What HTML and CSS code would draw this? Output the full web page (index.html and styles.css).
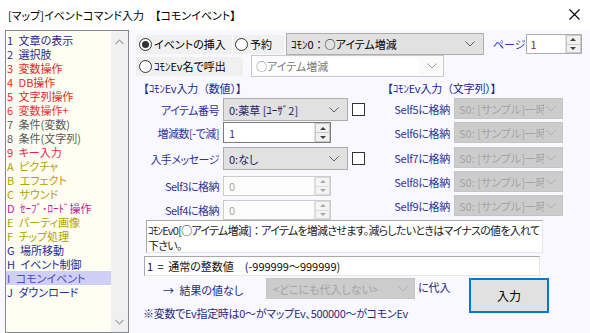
FILE: index.html
```html
<!DOCTYPE html>
<html lang="ja">
<head>
<meta charset="utf-8">
<title>[マップ]イベントコマンド入力</title>
<link rel="stylesheet" href="styles.css">
</head>
<body>
<div class="window">
  <div class="titlebar">
    <span class="title">[マップ]イベントコマンド入力　【コモンイベント】</span>
    <svg class="close" width="11" height="11" viewBox="0 0 11 11"><path d="M0.5 0.5L10.5 10.5M10.5 0.5L0.5 10.5" stroke="#000" stroke-width="1.1" fill="none"/></svg>
  </div>
  <div class="main">
    <div class="list">
      <ul class="items">
        <li class="c-navy">1 文章の表示</li>
        <li class="c-navy">2 選択肢</li>
        <li class="c-red">3 変数操作</li>
        <li class="c-red">4 DB操作</li>
        <li class="c-red">5 文字列操作</li>
        <li class="c-red2">6 変数操作+</li>
        <li class="c-gray">7 条件(変数)</li>
        <li class="c-gray">8 条件(文字列)</li>
        <li class="c-pink">9 キー入力</li>
        <li class="c-olive">A ピクチャ</li>
        <li class="c-olive">B エフェクト</li>
        <li class="c-olive">C サウンド</li>
        <li class="c-magenta">D ｾｰﾌﾞ･ﾛｰﾄﾞ操作</li>
        <li class="c-olive">E パーティ画像</li>
        <li class="c-olive">F チップ処理</li>
        <li class="c-blue">G 場所移動</li>
        <li class="c-blue">H イベント制御</li>
        <li class="c-sel">I コモンイベント</li>
        <li class="c-blue">J ダウンロード</li>
      </ul>
      <div class="scrollbar">
        <svg class="sb-arrow" width="9" height="6" viewBox="0 0 9 6"><path d="M0.5 5L4.5 1L8.5 5" stroke="#a6a6a6" stroke-width="1.2" fill="none"/></svg>
        <svg class="sb-arrow" width="9" height="6" viewBox="0 0 9 6"><path d="M0.5 1L4.5 5L8.5 1" stroke="#a6a6a6" stroke-width="1.2" fill="none"/></svg>
      </div>
    </div>

    <div class="panel">
      <div class="row-top">
        <label class="radio r-insert"><span class="circle on"></span>イベントの挿入</label>
        <label class="radio r-reserve"><span class="circle"></span>予約</label>
        <div class="combo combo-main"><span class="combo-text">ｺﾓﾝ0<span class="fw">：</span>○アイテム増減</span><svg class="chev" width="10" height="6" viewBox="0 0 10 6"><path d="M0.5 0.5L5 5L9.5 0.5" stroke="#606060" fill="none"/></svg></div>
        <span class="page-label">ページ</span>
        <div class="spin spin-page"><span class="spin-val">1</span><div class="spin-btns"><span class="sb up"></span><span class="sb down"></span></div></div>
      </div>
      <div class="row-second">
        <label class="radio r-name"><span class="circle"></span>ｺﾓﾝEv名で呼出</label>
        <div class="combo combo-name"><span class="combo-field">○アイテム増減</span><svg class="chev" width="10" height="6" viewBox="0 0 10 6"><path d="M0.5 0.5L5 5L9.5 0.5" stroke="#a0a0a0" fill="none"/></svg></div>
      </div>

      <div class="cols">
        <div class="col-left">
          <div class="sec-title">【ｺﾓﾝEv入力（数値）】</div>
          <div class="frow r1">
            <span class="lbl">アイテム番号</span>
            <div class="combo combo-form"><span class="combo-text">0:薬草 [ﾕｰｻﾞ2]</span><svg class="chev" width="10" height="6" viewBox="0 0 10 6"><path d="M0.5 0.5L5 5L9.5 0.5" stroke="#606060" fill="none"/></svg></div>
            <span class="check"></span>
          </div>
          <div class="frow r2">
            <span class="lbl">増減数[-で減]</span>
            <div class="spin spin-form"><span class="spin-val">1</span><div class="spin-btns"><span class="sb up"></span><span class="sb down"></span></div></div>
          </div>
          <div class="frow r3">
            <span class="lbl">入手メッセージ</span>
            <div class="combo combo-form"><span class="combo-text">0:なし</span><svg class="chev" width="10" height="6" viewBox="0 0 10 6"><path d="M0.5 0.5L5 5L9.5 0.5" stroke="#606060" fill="none"/></svg></div>
            <span class="check"></span>
          </div>
          <div class="frow r4">
            <span class="lbl">Self3に格納</span>
            <div class="spin spin-form disabled"><span class="spin-val">0</span><div class="spin-btns"><span class="sb up"></span><span class="sb down"></span></div></div>
          </div>
          <div class="frow r5">
            <span class="lbl">Self4に格納</span>
            <div class="spin spin-form disabled"><span class="spin-val">0</span><div class="spin-btns"><span class="sb up"></span><span class="sb down"></span></div></div>
          </div>
        </div>

        <div class="col-right">
          <div class="sec-title">【ｺﾓﾝEv入力（文字列）】</div>
          <div class="srow s1"><span class="lbl2">Self5に格納</span><div class="combo combo-dis"><span class="combo-text">S0: [サンプル]一時</span><svg class="chev" width="10" height="6" viewBox="0 0 10 6"><path d="M0.5 0.5L5 5L9.5 0.5" stroke="#b0b0b0" fill="none"/></svg></div></div>
          <div class="srow s2"><span class="lbl2">Self6に格納</span><div class="combo combo-dis"><span class="combo-text">S0: [サンプル]一時</span><svg class="chev" width="10" height="6" viewBox="0 0 10 6"><path d="M0.5 0.5L5 5L9.5 0.5" stroke="#b0b0b0" fill="none"/></svg></div></div>
          <div class="srow s3"><span class="lbl2">Self7に格納</span><div class="combo combo-dis"><span class="combo-text">S0: [サンプル]一時</span><svg class="chev" width="10" height="6" viewBox="0 0 10 6"><path d="M0.5 0.5L5 5L9.5 0.5" stroke="#b0b0b0" fill="none"/></svg></div></div>
          <div class="srow s4"><span class="lbl2">Self8に格納</span><div class="combo combo-dis"><span class="combo-text">S0: [サンプル]一時</span><svg class="chev" width="10" height="6" viewBox="0 0 10 6"><path d="M0.5 0.5L5 5L9.5 0.5" stroke="#b0b0b0" fill="none"/></svg></div></div>
          <div class="srow s5"><span class="lbl2">Self9に格納</span><div class="combo combo-dis"><span class="combo-text">S0: [サンプル]一時</span><svg class="chev" width="10" height="6" viewBox="0 0 10 6"><path d="M0.5 0.5L5 5L9.5 0.5" stroke="#b0b0b0" fill="none"/></svg></div></div>
        </div>
      </div>

      <div class="desc">ｺﾓﾝEv0[○アイテム増減]<span class="fw">：</span>アイテムを増減させます。減らしたいときはマイナスの値を入れて<br>下さい。</div>
      <div class="valbox">1 = 通常の整数値　(-999999～999999)</div>

      <div class="bottom">
        <div class="bottom-left">
          <div class="result-row">
            <span class="result-lbl">→ 結果の値なし</span>
            <div class="combo combo-result"><span class="combo-text">&lt;どこにも代入しない&gt;</span><svg class="chev" width="10" height="6" viewBox="0 0 10 6"><path d="M0.5 0.5L5 5L9.5 0.5" stroke="#b0b0b0" fill="none"/></svg></div>
            <span class="assign">に代入</span>
          </div>
          <div class="note">※変数でEv指定時は0～がマップEv、500000～がコモンEv</div>
        </div>
        <button class="ok">入力</button>
      </div>
    </div>
  </div>
</div>
</body>
</html>
```

FILE: styles.css
```css
* { box-sizing: border-box; margin: 0; padding: 0; }
body {
  margin: 0;
  width: 590px;
  height: 333px;
  overflow: hidden;
  font-family: "Noto Sans CJK JP", "Noto Sans", sans-serif;
  font-size: 11px;
  font-feature-settings: "palt" 1;
  background: #f8f8fe;
  color: #000;
}
.window { width: 590px; height: 333px; display: flex; flex-direction: column; }
.fw { font-feature-settings: normal; }

.titlebar {
  height: 30px;
  background: #fff;
  display: flex;
  align-items: center;
  justify-content: space-between;
  padding: 0 10px 0 8px;
  font-size: 11px;
}
.title { white-space: nowrap; }
.close { margin-top: -2px; }

.main { display: flex; height: 303px; }

/* list */
.list {
  margin-left: 5px;
  width: 124px;
  height: 303px;
  border: 1px solid #828790;
  background: #fdfdf2;
  display: flex;
}
.items { flex: 1; list-style: none; padding-top: 2px; overflow: hidden; }
.items li {
  height: 14px;
  line-height: 14px;
  padding-left: 1px;
  white-space: nowrap;
  font-size: 11px;
  word-spacing: 3px;
}
.c-navy { color: #2c2a8c; }
.c-red { color: #e42a2a; }
.c-red2 { color: #f2303e; }
.c-gray { color: #5a5a5a; }
.c-pink { color: #ea1e52; }
.c-olive { color: #b3a200; }
.c-magenta { color: #c81898; }
.c-blue { color: #1f2c98; }
.c-sel { color: #4a4ac4; background: #cfcff6; }

.scrollbar {
  width: 17px;
  background: #f0f0f0;
  display: flex;
  flex-direction: column;
  align-items: center;
  justify-content: space-between;
  padding: 8px 0 7px;
}

/* panel */
.panel { margin-left: 7px; width: 445px; display: flex; flex-direction: column; }

.row-top { margin-top: 3px; height: 22px; display: flex; align-items: center; }
.row-second { margin-top: 0; height: 22px; display: flex; align-items: center; }

.radio {
  height: 19px;
  background: #f0f0f0;
  display: flex;
  align-items: center;
  gap: 2px;
  white-space: nowrap;
  flex: none;
}
.r-insert { width: 96px; padding-left: 3px; }
.r-reserve { width: 51px; margin-left: 1px; padding-left: 2px; }
.r-name { width: 107px; padding-left: 3px; }
.circle {
  width: 13px; height: 13px;
  border: 1px solid #333;
  border-radius: 50%;
  background: #fff;
  display: flex; align-items: center; justify-content: center;
  flex: none;
}
.circle.on::after {
  content: "";
  width: 7px; height: 7px;
  border-radius: 50%;
  background: #333;
}

.combo {
  display: flex;
  align-items: center;
  justify-content: space-between;
  border: 1px solid #adadad;
  background: #e1e1e1;
  padding: 0 8px 0 4px;
  white-space: nowrap;
  overflow: hidden;
  flex: none;
}
.combo-text { overflow: hidden; white-space: nowrap; flex: 1; }
.chev { flex: none; margin-left: 2px; }
.combo-main { margin-left: 2px; width: 198px; height: 22px; }
.page-label { margin-left: 9px; color: #3434c0; white-space: nowrap; flex: none; }

.spin {
  display: flex;
  align-items: stretch;
  border: 1px solid #adadad;
  background: #fff;
  flex: none;
}
.spin-val { flex: 1; padding-left: 4px; display: flex; align-items: center; }
.spin-btns { width: 16px; display: flex; flex-direction: column; border-left: 1px solid #e0e0e0; }
.sb {
  flex: 1;
  background: #f0f0f0;
  border: 1px solid #c8c8c8;
  display: flex; align-items: center; justify-content: center;
}
.sb.up { border-bottom: none; }
.sb.up::after {
  content: "";
  border-left: 3px solid transparent;
  border-right: 3px solid transparent;
  border-bottom: 3px solid #404040;
}
.sb.down::after {
  content: "";
  border-left: 3px solid transparent;
  border-right: 3px solid transparent;
  border-top: 3px solid #404040;
}
.spin-page { margin-left: auto; width: 56px; height: 20px; }
.spin-page .spin-val { color: #8a2a2a; }

.r-name + .combo-name { margin-left: 8px; }
.combo-name {
  width: 193px; height: 22px;
  background: #fafafa;
  border-color: #cacaca;
  padding: 2px 6px 2px 2px;
}
.combo-field {
  flex: 1;
  height: 16px;
  background: #fff;
  color: #7a7a7a;
  padding-left: 2px;
  line-height: 16px;
  margin-right: 6px;
}

/* columns */
.cols { display: flex; margin-top: 3px; }
.col-left { width: 244px; display: flex; flex-direction: column; }
.col-right { display: flex; flex-direction: column; }
.sec-title {
  height: 15px; line-height: 15px; margin-top: 1px; padding-left: 2px;
  color: #25258f; white-space: nowrap;
  font-feature-settings: normal;
  letter-spacing: -0.2px;
}

.frow { display: flex; align-items: center; }
.lbl {
  width: 83px;
  text-align: right;
  color: #33339a;
  white-space: nowrap;
  letter-spacing: -0.5px;
  margin-right: 4px;
  flex: none;
}
.r1 { margin-top: 2px; height: 23px; }
.r2 { margin-top: 1px; height: 21px; }
.r3 { margin-top: 4px; height: 23px; }
.r4 { margin-top: 6px; height: 20px; }
.r5 { margin-top: 4px; height: 20px; }
.combo-form { width: 125px; height: 23px; color: #202060; padding-left: 5px; }
.check { width: 13px; height: 13px; border: 1px solid #333; background: #fff; margin-left: 4px; flex: none; }
.spin-form { width: 108px; height: 21px; border-color: #7a7a7a; }
.spin-form .spin-val { color: #4a2a8a; padding-left: 5px; }
.spin-form.disabled { height: 20px; border-color: #cccccc; background: #fcfcfc; }
.spin-form.disabled .spin-val { color: #a8a8a8; }
.disabled .sb { border-color: #dadada; background: #f4f4f4; }
.disabled .sb.up::after { border-bottom-color: #a8a8a8; }
.disabled .sb.down::after { border-top-color: #a8a8a8; }

.srow { display: flex; align-items: center; height: 21px; }
.s1 { margin-top: 2px; }
.s2 { margin-top: 3px; }
.s3 { margin-top: 4px; }
.s4 { margin-top: 3px; }
.s5 { margin-top: 3px; }
.lbl2 { width: 70px; text-align: right; color: #33339a; margin-right: 4px; white-space: nowrap; letter-spacing: -0.3px; flex: none; }
.combo-dis {
  width: 109px; height: 21px;
  background: #cccccc;
  border-color: #c4c4c4;
  color: #a4a4a4;
  padding: 0 6px 0 4px;
}

/* description */
.desc {
  margin-left: 10px;
  width: 397px;
  height: 33px;
  background: #fff;
  border: 1px solid #a8a8a8;
  border-right-color: #e6e6e6;
  border-bottom-color: #e6e6e6;
  padding: 2px 1px 0 1px;
  line-height: 15px;
  white-space: nowrap;
  overflow: hidden;
  color: #222;
  letter-spacing: -0.75px;
}
.valbox {
  margin-left: 8px;
  margin-top: 3px;
  width: 396px;
  height: 20px;
  background: #fff;
  border: 1px solid #a8a8a8;
  border-right-color: #e6e6e6;
  border-bottom-color: #e6e6e6;
  padding-left: 2px;
  line-height: 18px;
  white-space: nowrap;
  color: #111;
  word-spacing: 2px;
}

.bottom { display: flex; margin-top: 2px; }
.bottom-left { margin-left: 7px; display: flex; flex-direction: column; width: 326px; }
.result-row { display: flex; align-items: flex-start; height: 21px; }
.result-lbl { margin-left: 20px; width: 103px; line-height: 24px; color: #2a2a80; white-space: nowrap; word-spacing: 3px; flex: none; }
.combo-result {
  width: 149px; height: 21px;
  background: #cccccc;
  border-color: #c4c4c4;
  color: #a4a4a4;
  padding: 0 6px 0 6px;
}
.assign { margin-left: 3px; line-height: 18px; color: #2a2a80; white-space: nowrap; }
.note { margin-top: 7px; line-height: 14px; color: #2a2a80; white-space: nowrap; letter-spacing: -0.3px; }
.ok {
  width: 80px;
  height: 35px;
  background: #e1e1e1;
  border: 2px solid #0078d7;
  font-family: inherit;
  font-size: 12px;
  font-feature-settings: "palt" 1;
  color: #000;
  flex: none;
}
```
